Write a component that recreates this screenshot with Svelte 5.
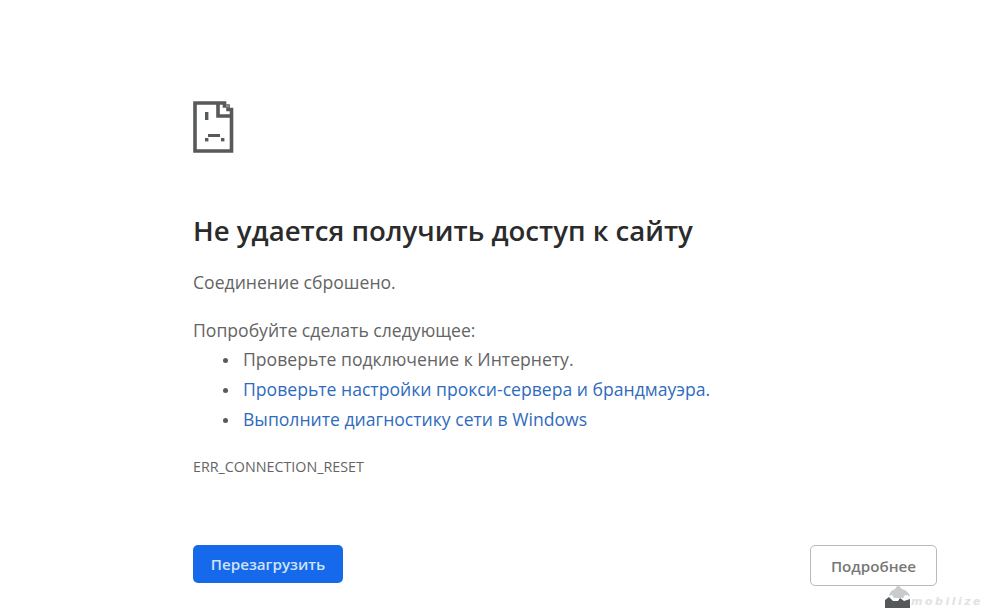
<script>
  const steps = [
    { text: "Проверьте подключение к Интернету.", link: false },
    { text: "Проверьте настройки прокси-сервера и брандмауэра.", link: true },
    { text: "Выполните диагностику сети в Windows", link: true },
  ];
</script>

<main class="page">
  <svg class="icon" width="42" height="52" viewBox="0 0 42 52" aria-hidden="true">
    <path d="M2 2H31.5V5H35V8.5H38.5V50H2Z" fill="none" stroke="#58595b" stroke-width="3.6" />
    <path d="M25 2V15H38.5" fill="none" stroke="#58595b" stroke-width="3.6" />
    <rect x="33" y="3.5" width="3" height="3" fill="#8a8b8d" />
    <rect x="12" y="11" width="3.4" height="8" fill="#58595b" />
    <rect x="15" y="33" width="12" height="3" fill="#58595b" />
    <rect x="12" y="37" width="3.4" height="3.4" fill="#58595b" />
    <rect x="28" y="37" width="3.4" height="3.4" fill="#58595b" />
  </svg>

  <h1>Не удается получить доступ к сайту</h1>
  <p class="reason">Соединение сброшено.</p>
  <p class="try">Попробуйте сделать следующее:</p>
  <ul>
    {#each steps as step}
      <li class:link={step.link}>{step.text}</li>
    {/each}
  </ul>
  <div class="code">ERR_CONNECTION_RESET</div>

  <div class="buttons">
    <button class="reload">Перезагрузить</button>
    <button class="details">Подробнее</button>
  </div>
</main>

<div class="watermark">
  <svg width="26" height="23" viewBox="0 0 26 23" aria-hidden="true">
    <path d="M4 11C5 6 8 5 10 4L13 0L17 4C21 5 23 7 25 11L20 10L18 13H9L7 10Z" fill="#c9cbcd" />
    <path d="M0 23V15L4 12L8 16H13L15 13L19 16L25 14V23Z" fill="#55585a" />
  </svg>
  <span>mobilize</span>
</div>

<style>
  :global(body) {
    margin: 0;
    background: #fff;
  }

  .page {
    box-sizing: border-box;
    height: 614px;
    padding: 101px 63px 0 193px;
    font-family: "Open Sans", "Noto Sans", sans-serif;
    color: #646464;
    font-size: 17.6px;
    overflow: hidden;
  }

  .icon {
    display: block;
  }

  h1 {
    margin: 57px 0 0;
    font-size: 27.6px;
    line-height: 40px;
    font-weight: 600;
    color: #2b2b2b;
  }

  p {
    margin: 0;
    line-height: 24px;
  }

  .reason {
    margin-top: 20px;
  }

  .try {
    margin-top: 24px;
  }

  ul {
    margin: 2px 0 0;
    padding: 0 0 0 30px;
    list-style: none;
  }

  li {
    line-height: 30px;
  }

  li::before {
    content: "";
    display: inline-block;
    width: 5px;
    height: 5px;
    margin-right: 15px;
    border-radius: 50%;
    background: #5a5a5a;
    vertical-align: 3px;
  }

  li.link {
    color: #2f6bbd;
  }

  .code {
    margin-top: 21px;
    font-size: 14.3px;
    line-height: 24px;
  }

  .buttons {
    display: flex;
    justify-content: space-between;
    align-items: flex-start;
    margin-top: 66px;
  }

  button {
    font-family: inherit;
    font-size: 15.2px;
    font-weight: 600;
    border-radius: 5px;
    cursor: pointer;
  }

  .reload {
    width: 150px;
    height: 38px;
    background: #1569ea;
    color: #cfe2fb;
    border: none;
  }

  .details {
    width: 127px;
    height: 41px;
    background: #fff;
    color: #777;
    border: 1px solid #b9b9b9;
  }

  .watermark {
    position: absolute;
    left: 885px;
    top: 585px;
    display: flex;
    align-items: flex-end;
    font-family: "DejaVu Sans", sans-serif;
    font-size: 11px;
    font-style: italic;
    font-weight: 700;
    color: #e2e2e2;
    letter-spacing: 2.5px;
  }
</style>
